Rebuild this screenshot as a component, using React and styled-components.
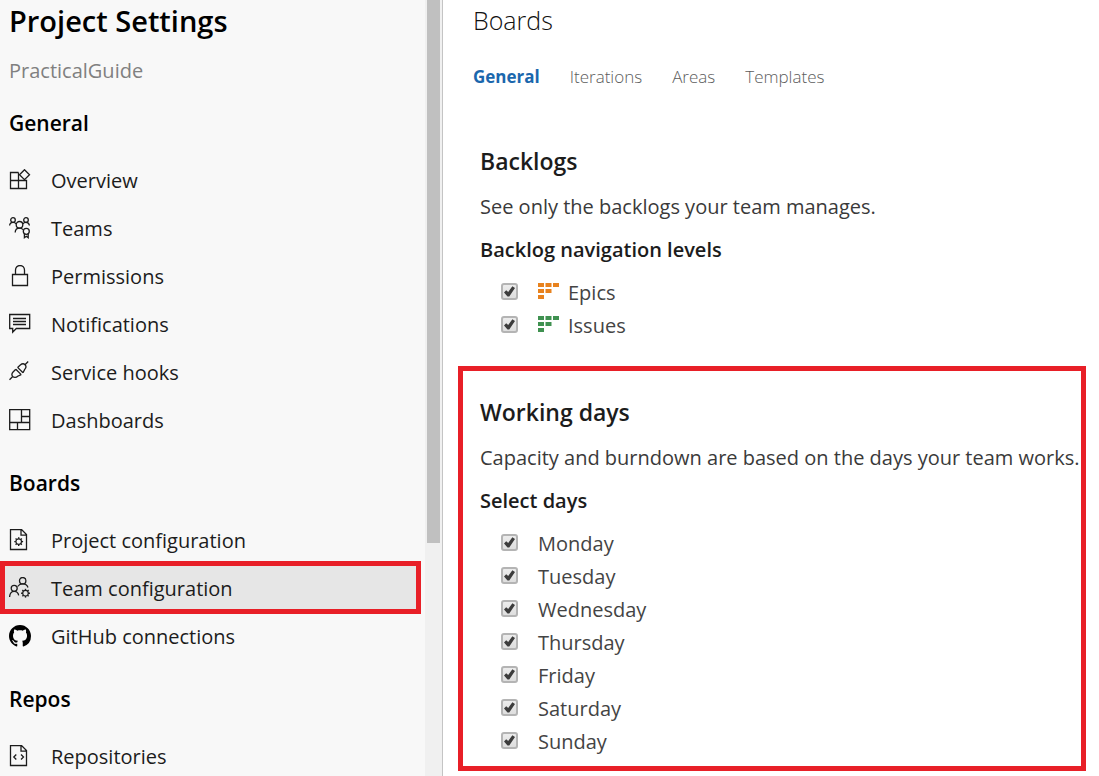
import React from "react";
import styled, { createGlobalStyle, css } from "styled-components";

const GlobalStyle = createGlobalStyle`
  *, *::before, *::after { box-sizing: border-box; }
  body {
    margin: 0;
    background: #fff;
    color: #1c1c1c;
    font-family: "Open Sans", "Noto Sans", sans-serif;
    font-size: 20px;
  }
  h1, h2, h3, p, ul { margin: 0; padding: 0; }
  ul { list-style: none; }
`;

const Page = styled.div`
  display: flex;
  height: 100vh;
  overflow: hidden;
`;

const Sidebar = styled.aside`
  flex: 0 0 443px;
  display: flex;
  overflow: hidden;
  background: #f8f8f8;
  border-right: 1px solid #c4c4c4;
`;

const SidebarBody = styled.div`
  flex: 1;
  min-width: 0;
`;

const ScrollTrack = styled.div`
  flex: 0 0 17px;
  padding: 0 2px;
  background: #f0f0f0;
`;

const ScrollThumb = styled.div`
  height: 70%;
  background: #c0c0c0;
`;

const Title = styled.h1`
  padding-left: 9px;
  font-size: 29px;
  font-weight: 600;
  line-height: 42px;
  color: #000;
`;

const ProjectName = styled.p`
  margin-top: 16px;
  padding-left: 9px;
  line-height: 26px;
  color: #808080;
`;

const GroupTitle = styled.h2`
  margin: 15px 0 9px;
  padding-left: 9px;
  font-size: 21px;
  font-weight: 600;
  line-height: 48px;
  color: #000;
`;

const NavLink = styled.a`
  position: relative;
  display: flex;
  align-items: center;
  gap: 20px;
  height: 48px;
  margin-right: 4px;
  padding-left: 9px;
  color: #1c1c1c;
  text-decoration: none;

  svg { flex: none; }

  ${({ $current }) => $current && css`
    background: #e6e6e6;
    &::after {
      content: "";
      position: absolute;
      inset: -3px 0 -2px;
      border: 5px solid #e81f27;
    }
  `}
`;

const Main = styled.main`
  flex: 1;
  min-width: 0;
  padding: 0 13px 0 15px;
`;

const PageTitle = styled.h1`
  padding-left: 15px;
  font-size: 25px;
  font-weight: 300;
  line-height: 40px;
  color: #111;
`;

const Tabs = styled.nav`
  display: flex;
  gap: 30px;
  margin-top: 25px;
  padding-left: 15px;
  font-size: 17px;
  line-height: 24px;
`;

const Tab = styled.a`
  color: ${({ $current }) => ($current ? "#1a67ad" : "#5c5c5c")};
  font-weight: ${({ $current }) => ($current ? 700 : 300)};
  text-decoration: none;
`;

const Section = styled.section`
  margin-top: ${({ $marked }) => ($marked ? "11px" : "26px")};
  padding: 24px 0 8px 17px;
  border: 5px solid ${({ $marked }) => ($marked ? "#e81f27" : "transparent")};
  white-space: nowrap;
`;

const SectionTitle = styled.h2`
  font-size: 23px;
  font-weight: 600;
  line-height: 34px;
`;

const Description = styled.p`
  margin-top: 14px;
  line-height: 30px;
  color: #3a3a3a;
`;

const Subtitle = styled.h3`
  margin-top: 13px;
  font-size: 20px;
  font-weight: 600;
  line-height: 30px;
`;

const OptionList = styled.ul`
  margin-top: 11px;
  padding-left: 21px;
`;

const Option = styled.label`
  display: flex;
  align-items: center;
  height: 33px;
  color: #444;
`;

const Checkbox = styled.input.attrs({ type: "checkbox" })`
  appearance: none;
  display: grid;
  place-items: center;
  width: 17px;
  height: 17px;
  margin: 0 20px 2px 0;
  border: 2px solid #b4b4b4;
  border-radius: 3px;
  background: linear-gradient(#ececec, #dedede);

  &:checked::before {
    content: "";
    width: 11px;
    height: 11px;
    background: #3c3c3c;
    clip-path: polygon(0 60%, 20% 38%, 38% 54%, 76% 2%, 100% 18%, 48% 96%, 32% 96%);
  }
`;

const LevelMark = styled.svg`
  margin: 0 9px 2px 0;
`;

const Icon = ({ children }) => (
  <svg width="22" height="22" viewBox="0 0 22 22" fill="none" stroke="#1c1c1c" strokeWidth="1.3" aria-hidden="true">
    {children}
  </svg>
);

const Gear = ({ x, y }) => (
  <g transform={`translate(${x} ${y})`}>
    <circle r="2.8" strokeWidth="1.2" />
    {[0, 45, 90, 135, 180, 225, 270, 315].map((a) => (
      <path key={a} d="M0-2.8V-4.4" strokeWidth="1.4" transform={`rotate(${a})`} />
    ))}
  </g>
);

const Sheet = () => <path d="M1.5.5h11l5 5v15h-16zM12 .8v5.4h5.4" />;

const icons = {
  overview: <Icon><path d="M9.5 3.5h-8v16h16v-8h-16M9.5 3.5v16" /><path d="M15.5.7l5 5-5 5-5-5z" fill="#f8f8f8" /></Icon>,
  teams: (
    <Icon>
      <circle cx="4" cy="3" r="2.3" /><circle cx="17" cy="3" r="2.3" />
      <circle cx="10.5" cy="7.8" r="3.3" />
      <path d="M.6 8.5C.8 6.3 2.2 5.3 4 5.3c1.5 0 2.5.6 3.2 1.7M13.8 7c.7-1.1 1.7-1.7 3.2-1.7 1.8 0 3.2 1 3.4 3.2M6.2 15.6c0-2.6 1.7-4.5 4.3-4.5 1.5 0 2.7.5 3.5 1.5" />
      <circle cx="17.3" cy="14.3" r="3" /><path d="M15.4 16.7v4l1.9-1.4 1.9 1.4v-4" />
    </Icon>
  ),
  permissions: <Icon><path d="M3.5 9.5h15v11h-15zM6.5 9.5V5a4.5 4.5 0 0 1 9 0v4.5" /></Icon>,
  notifications: <Icon><path d="M.7 1.5h20v14H7.3l-3.6 3.6v-3.6h-3zM4 5.5h13M4 8.5h13M4 11.5h13" /></Icon>,
  hooks: (
    <Icon>
      <path d="M.5 18.8l3-3M16 3.7l3.2-3.2M6.8 8.2l5.4 5.4M8.6 6.4l5.4 5.4" />
      <path d="M6.8 8.2 4.3 10.7c-1.7 1.7-1.7 3.5-.6 4.8 1.3 1.3 3.5 1.2 5-.3l3.5-1.6M8.6 6.4l2.7-2.4c1.6-1.3 3.6-1.4 4.7-.3 1.3 1.3 1 3.3-.3 4.7L14 11.8" />
    </Icon>
  ),
  dashboards: <Icon><path d="M.7.7h20v20H.7zM12.5.7v13M.7 13.5h20M12.5 7.5h8M8.5 13.5v7" /></Icon>,
  project: <Icon><Sheet /><Gear x={9.7} y={12.6} /></Icon>,
  team: (
    <Icon>
      <circle cx="13.7" cy="3.7" r="3.2" /><circle cx="5.2" cy="11.3" r="3" />
      <path d="M.6 20c.2-3.6 2-5.7 4.6-5.7 2.3 0 4 1.5 4.5 4M8.6 9.5c1.2-1.7 2.9-2.6 5.1-2.6 2.6 0 4.5 1.2 5.3 3.6" />
      <Gear x={16.5} y={16.2} />
    </Icon>
  ),
  github: (
    <svg width="22" height="22" viewBox="0 0 16 16" fill="#000" aria-hidden="true">
      <path d="M8 0C3.58 0 0 3.58 0 8c0 3.54 2.29 6.53 5.47 7.59.4.07.55-.17.55-.38 0-.19-.01-.82-.01-1.49-2.01.37-2.53-.49-2.69-.94-.09-.23-.48-.94-.82-1.13-.28-.15-.68-.52-.01-.53.63-.01 1.08.58 1.23.82.72 1.21 1.87.87 2.33.66.07-.52.28-.87.51-1.07-1.78-.2-3.64-.89-3.64-3.95 0-.87.31-1.59.82-2.15-.08-.2-.36-1.02.08-2.12 0 0 .67-.21 2.2.82.64-.18 1.32-.27 2-.27s1.36.09 2 .27c1.53-1.04 2.2-.82 2.2-.82.44 1.1.16 1.92.08 2.12.51.56.82 1.27.82 2.15 0 3.07-1.87 3.75-3.65 3.95.29.25.54.73.54 1.48 0 1.07-.01 1.93-.01 2.2 0 .21.15.46.55.38A8.01 8.01 0 0 0 16 8c0-4.42-3.58-8-8-8z" />
    </svg>
  ),
  repositories: <Icon><Sheet /><path d="M7.3 9.5 4.8 12l2.5 2.5M12 9.5l2.5 2.5-2.5 2.5" /></Icon>,
};

const groups = [
  {
    title: "General",
    items: [
      ["overview", "Overview"],
      ["teams", "Teams"],
      ["permissions", "Permissions"],
      ["notifications", "Notifications"],
      ["hooks", "Service hooks"],
      ["dashboards", "Dashboards"],
    ],
  },
  {
    title: "Boards",
    items: [
      ["project", "Project configuration"],
      ["team", "Team configuration"],
      ["github", "GitHub connections"],
    ],
  },
  { title: "Repos", items: [["repositories", "Repositories"]] },
];

const levels = [
  ["Epics", "#e8821e"],
  ["Issues", "#3f9150"],
];

const days = ["Monday", "Tuesday", "Wednesday", "Thursday", "Friday", "Saturday", "Sunday"];

const LevelIcon = ({ color }) => (
  <LevelMark width="21" height="17" viewBox="0 0 21 17" fill={color} aria-hidden="true">
    <path d="M0 0h6v4H0zM7.5 0h6v4h-6zM15 0h6v4h-6zM0 6h6v4H0zM7.5 6h6v4h-6zM0 12h6v4H0z" />
  </LevelMark>
);

export default function App() {
  return (
    <Page>
      <GlobalStyle />
      <Sidebar>
        <SidebarBody>
          <Title>Project Settings</Title>
          <ProjectName>PracticalGuide</ProjectName>
          <nav aria-label="Project settings">
            {groups.map((group) => (
              <React.Fragment key={group.title}>
                <GroupTitle>{group.title}</GroupTitle>
                <ul>
                  {group.items.map(([id, label]) => (
                    <li key={id}>
                      <NavLink href={`#${id}`} $current={id === "team"}>
                        {icons[id]}
                        {label}
                      </NavLink>
                    </li>
                  ))}
                </ul>
              </React.Fragment>
            ))}
          </nav>
        </SidebarBody>
        <ScrollTrack>
          <ScrollThumb />
        </ScrollTrack>
      </Sidebar>
      <Main>
        <PageTitle>Boards</PageTitle>
        <Tabs aria-label="Boards">
          {["General", "Iterations", "Areas", "Templates"].map((tab) => (
            <Tab key={tab} href={`#${tab.toLowerCase()}`} $current={tab === "General"}>
              {tab}
            </Tab>
          ))}
        </Tabs>
        <Section>
          <SectionTitle>Backlogs</SectionTitle>
          <Description>See only the backlogs your team manages.</Description>
          <Subtitle>Backlog navigation levels</Subtitle>
          <OptionList>
            {levels.map(([name, color]) => (
              <li key={name}>
                <Option>
                  <Checkbox defaultChecked />
                  <LevelIcon color={color} />
                  {name}
                </Option>
              </li>
            ))}
          </OptionList>
        </Section>
        <Section $marked>
          <SectionTitle>Working days</SectionTitle>
          <Description>Capacity and burndown are based on the days your team works.</Description>
          <Subtitle>Select days</Subtitle>
          <OptionList>
            {days.map((day) => (
              <li key={day}>
                <Option>
                  <Checkbox defaultChecked />
                  {day}
                </Option>
              </li>
            ))}
          </OptionList>
        </Section>
      </Main>
    </Page>
  );
}
